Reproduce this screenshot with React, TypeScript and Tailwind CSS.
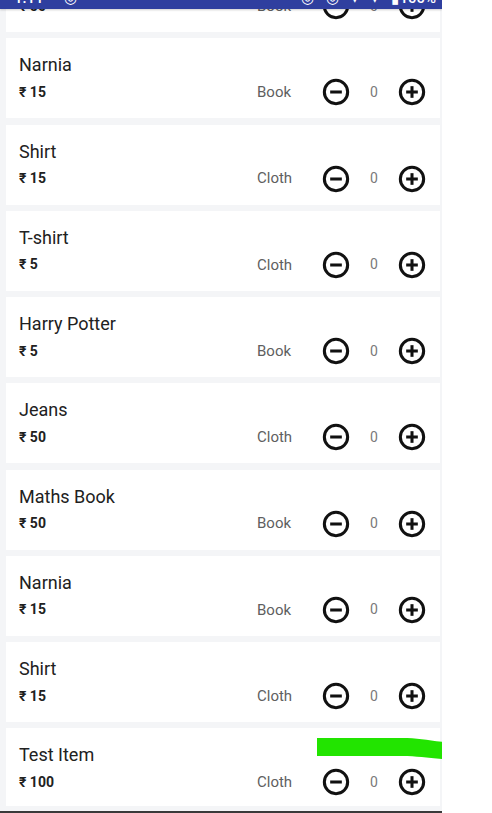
import React from "react";

type Item = { name: string; price: number; cat: string };

const items: Item[] = [
  { name: "Maths Book", price: 50, cat: "Book" },
  { name: "Narnia", price: 15, cat: "Book" },
  { name: "Shirt", price: 15, cat: "Cloth" },
  { name: "T-shirt", price: 5, cat: "Cloth" },
  { name: "Harry Potter", price: 5, cat: "Book" },
  { name: "Jeans", price: 50, cat: "Cloth" },
  { name: "Maths Book", price: 50, cat: "Book" },
  { name: "Narnia", price: 15, cat: "Book" },
  { name: "Shirt", price: 15, cat: "Cloth" },
  { name: "Test Item", price: 100, cat: "Cloth" },
];

function MinusIcon() {
  return (
    <svg width="28" height="28" viewBox="0 0 24 24" fill="none" stroke="#111" strokeWidth="2.6">
      <circle cx="12" cy="12" r="10" />
      <line x1="7" y1="12" x2="17" y2="12" />
    </svg>
  );
}

function PlusIcon() {
  return (
    <svg width="28" height="28" viewBox="0 0 24 24" fill="none" stroke="#111" strokeWidth="2.6">
      <circle cx="12" cy="12" r="10" />
      <line x1="7" y1="12" x2="17" y2="12" />
      <line x1="12" y1="7" x2="12" y2="17" />
    </svg>
  );
}

function Card({ item }: { item: Item }) {
  return (
    <div className="h-[80px] shrink-0 bg-white flex flex-col pl-[13px] pr-[14px] pt-[16px]">
      <div className="text-[18px] leading-[22px] text-[#212121]">{item.name}</div>
      <div className="mt-[2px] h-[28px] flex items-center">
        <div className="w-[238px] text-[14px] font-bold text-[#212121]">₹ {item.price}</div>
        <div className="w-[65px] text-[15px] text-[#5f5f5f]">{item.cat}</div>
        <MinusIcon />
        <div className="w-[48px] text-center text-[14px] text-[#7a7a7a]">0</div>
        <PlusIcon />
      </div>
    </div>
  );
}

export default function App() {
  return (
    <div
      className="w-[492px] h-[813px] flex bg-white overflow-hidden"
      style={{ fontFamily: "Roboto, 'Liberation Sans', sans-serif" }}
    >
      <div className="relative w-[442px] h-[813px] bg-[#f4f5f7] flex flex-col overflow-hidden">
        <div className="flex-1 overflow-hidden">
          <div className="-mt-[48px] pl-[6px] pr-[2px] flex flex-col gap-[6.25px]">
            {items.map((it, i) => (
              <Card key={i} item={it} />
            ))}
          </div>
        </div>
        <div className="mt-[5px] h-[2px] bg-[#3a3a3a]" />

        {/* status bar */}
        <div className="absolute left-0 top-0 w-[442px] h-[9px] bg-[#2f3f9f] overflow-hidden shadow-[0_1px_2px_rgba(0,0,0,0.2)]">
          <div className="absolute left-[14px] -top-[9px] text-white text-[15px] font-medium leading-[15px] flex gap-[20px]">
            <span>1:11</span>
            <span>◎</span>
          </div>
          <div className="absolute right-[6px] -top-[9px] text-white text-[15px] font-medium leading-[15px] flex gap-[12px]">
            <span>◎</span>
            <span>◎</span>
            <span>▾</span>
            <span>▾</span>
            <span>▮100%</span>
          </div>
        </div>

        {/* green highlight stroke */}
        <svg className="absolute left-[317px] top-[736px]" width="126" height="25" viewBox="0 0 126 25">
          <path d="M0 2 L85 2 C100 2 110 4 126 6 L126 23 C110 22 100 20 85 20 L0 20 Z" fill="#22e400" />
        </svg>
      </div>
      <div className="flex-1" />
    </div>
  );
}
